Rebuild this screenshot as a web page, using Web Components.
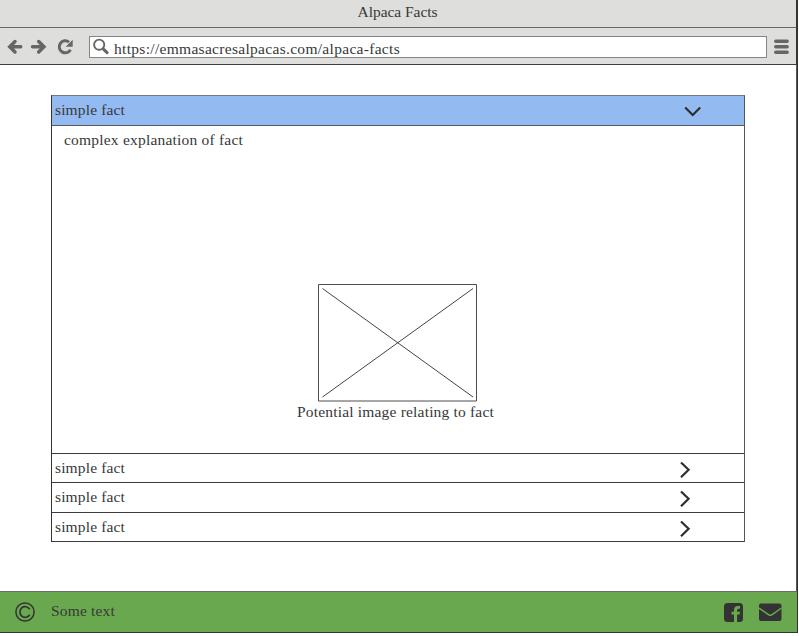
<!DOCTYPE html>
<html lang="en"><head><meta charset="utf-8"><title>Alpaca Facts</title>
<style>body{margin:0;background:#fff;color:#383838;font:15.5px/20px "Liberation Serif",serif}</style></head>
<body>
<browser-frame>
<fit-text slot="title" width="80">Alpaca Facts</fit-text>
<fit-text slot="url" width="286">https://emmasacresalpacas.com/alpaca-facts</fit-text>
<fact-list>
<fact-row open height="29">simple fact
<fit-text slot="body" width="179">complex explanation of fact</fit-text>
<image-placeholder slot="body"><fit-text width="197">Potential image relating to fact</fit-text></image-placeholder>
</fact-row>
<fact-row height="28">simple fact</fact-row>
<fact-row height="29">simple fact</fact-row>
<fact-row height="28">simple fact</fact-row>
</fact-list>
<page-footer slot="footer"><fit-text width="64">Some text</fit-text></page-footer>
</browser-frame>
<script>
const define=(name,html,setup)=>customElements.define(name,class extends HTMLElement{
  constructor(){super();this.attachShadow({mode:'open'}).innerHTML=html;}
  connectedCallback(){if(setup)setup(this);}
});

define('fit-text',`<style>:host{display:block;white-space:nowrap;width:max-content;height:20px}span{display:inline-block}</style><span><slot></slot></span>`,el=>{
  const span=el.shadowRoot.querySelector('span');
  const gap=(Number(el.getAttribute('width'))-span.getBoundingClientRect().width)/el.textContent.length;
  span.style.letterSpacing=gap+'px';
});

define('image-placeholder',`<style>
:host{display:flex;flex-direction:column;align-items:center;width:197px;margin:134px 0 0 233px}
svg{display:block;margin-left:4px;margin-bottom:0}</style>
<svg width="160" height="118" fill="none" stroke="#444"><path stroke="#4d4d4d" d="M.5 .5h158v116.500H.5z"/><path d="M4.5 4.500 155 113M155 4.500 4.500 113"/></svg><slot></slot>`);

define('fact-row',`<style>
:host{display:block;border-bottom:1px solid #3c3c3e}
header{display:flex;justify-content:space-between;box-sizing:border-box;padding-left:3px}
:host([open]) header{background:#94baf2;border-bottom:1px solid #555a63}
fit-text{padding-top:4px}
svg{display:block;flex:none;margin-right:46px;fill:none;stroke:#302c30;stroke-width:2.200}
.open,.body{display:none}
:host([open]) .open{display:block;margin-right:40px}
:host([open]) .closed{display:none}
:host([open]) .body{display:block;height:327px;padding-left:12px;padding-top:4px;box-sizing:border-box}
[hidden]{display:none}
</style><header><fit-text width="70">simple fact</fit-text>
<svg class="closed" width="20" height="28"><path d="m3 8.500 7.600 7.300-7.600 7.500"/></svg>
<svg class="open" width="22" height="28"><path d="m3.200 11.500 7.500 7.500 7.500-7.500"/></svg></header>
<div class="body"><slot name="body"></slot></div><span hidden><slot></slot></span>`,el=>{
  el.shadowRoot.querySelector('header').style.height=(Number(el.getAttribute('height'))+(el.hasAttribute('open')?1:0))+'px';
});

define('fact-list',`<style>:host{display:block;box-sizing:border-box;width:694px;margin:30px 0 0 51px;border:1px solid #555;border-left-color:#333;border-top-color:#777;border-bottom:0}</style><slot></slot>`);

define('page-footer',`<style>
:host{display:flex;align-items:center;height:42px;box-sizing:border-box;background:#6aa84f;border-top:1px solid #676f64;border-bottom:1px solid #333;padding:0 15px 0 15px}
svg{display:block;flex:none}.text{margin-left:16px;padding-bottom:2px}.fb{margin-left:auto;margin-right:16px}</style>
<svg width="20" height="20" fill="none" stroke="#333"><circle cx="10" cy="10" r="9.100" stroke-width="1.500"/><path stroke-width="1.700" d="M14.700 7.200A5.300 5.300 0 1 0 14.700 12.800"/></svg>
<div class="text"><slot></slot></div>
<svg class="fb" width="19" height="19"><rect width="19" height="19" rx="3.500" fill="#333"/><path fill="#6aa84f" d="M10 19v-7.500H7.500V8.700H10V7q0-4 4-4h2v2.700h-1.500q-1.400 0-1.400 1.600v1.400H16l-.5 2.800h-2.400V19z"/></svg>
<svg width="23" height="18"><rect y=".5" width="22.500" height="17.500" rx="2" fill="#333"/><path fill="none" stroke="#6aa84f" stroke-width="1.500" d="M0 5 9 11.300Q11.300 13 13.500 11.300L22.500 5"/></svg>`);

define('browser-frame',`<style>
:host{display:grid;grid-template-rows:28px 37px 526px 42px;width:798px;height:633px;box-sizing:border-box;border-right:1px solid #333}
.title{background:#dededc;border-bottom:1px solid #666;display:flex;justify-content:center;padding:2px 1px 0 0;box-sizing:border-box}
.bar{background:#dededc;border-bottom:1px solid #3e3e3e;display:flex;box-sizing:border-box;padding:8px 6px 0 7px}
.bar>svg{display:block;flex:none}
.url{display:flex;flex:none;width:678px;height:22px;box-sizing:border-box;background:#fff;border:1px solid #858585;margin-left:15px;margin-right:7px}
.url svg{flex:none;margin-right:4px}.url slot{display:block;padding-top:2px}
main{display:flow-root;border-right:1px solid #555}
.title,.bar{border-right:1px solid #333}
</style>
<div class="title"><slot name="title"></slot></div>
<div class="bar">
<svg width="67" height="22" fill="none" stroke="#666" stroke-width="3.500" stroke-linecap="round"><path d="M3.500 10.700H13.700M8 5.500 2.800 10.700 8 15.900M25.500 10.700H36M31.700 5.500l5.200 5.200-5.200 5.200"/><path stroke-width="3" stroke-linecap="butt" d="M63.500 13.700A6 6 0 1 1 62 6.100"/><path fill="#666" stroke="none" d="M65.700 3.700v7h-7z"/></svg>
<div class="url"><svg width="20" height="20" fill="none" stroke="#666"><circle cx="9.200" cy="7.700" r="5.100" stroke-width="1.900"/><path stroke-width="3" stroke-linecap="round" d="m13.700 12.300 3.400 3.300"/></svg><slot name="url"></slot></div>
<svg width="16" height="22" stroke="#666" stroke-width="3.600" stroke-linecap="round"><path d="M1.800 5.200h11.300M1.800 10.700h11.300M1.800 16.200h11.300"/></svg>
</div>
<main><slot></slot></main><slot name="footer"></slot>`);
</script></body></html>
